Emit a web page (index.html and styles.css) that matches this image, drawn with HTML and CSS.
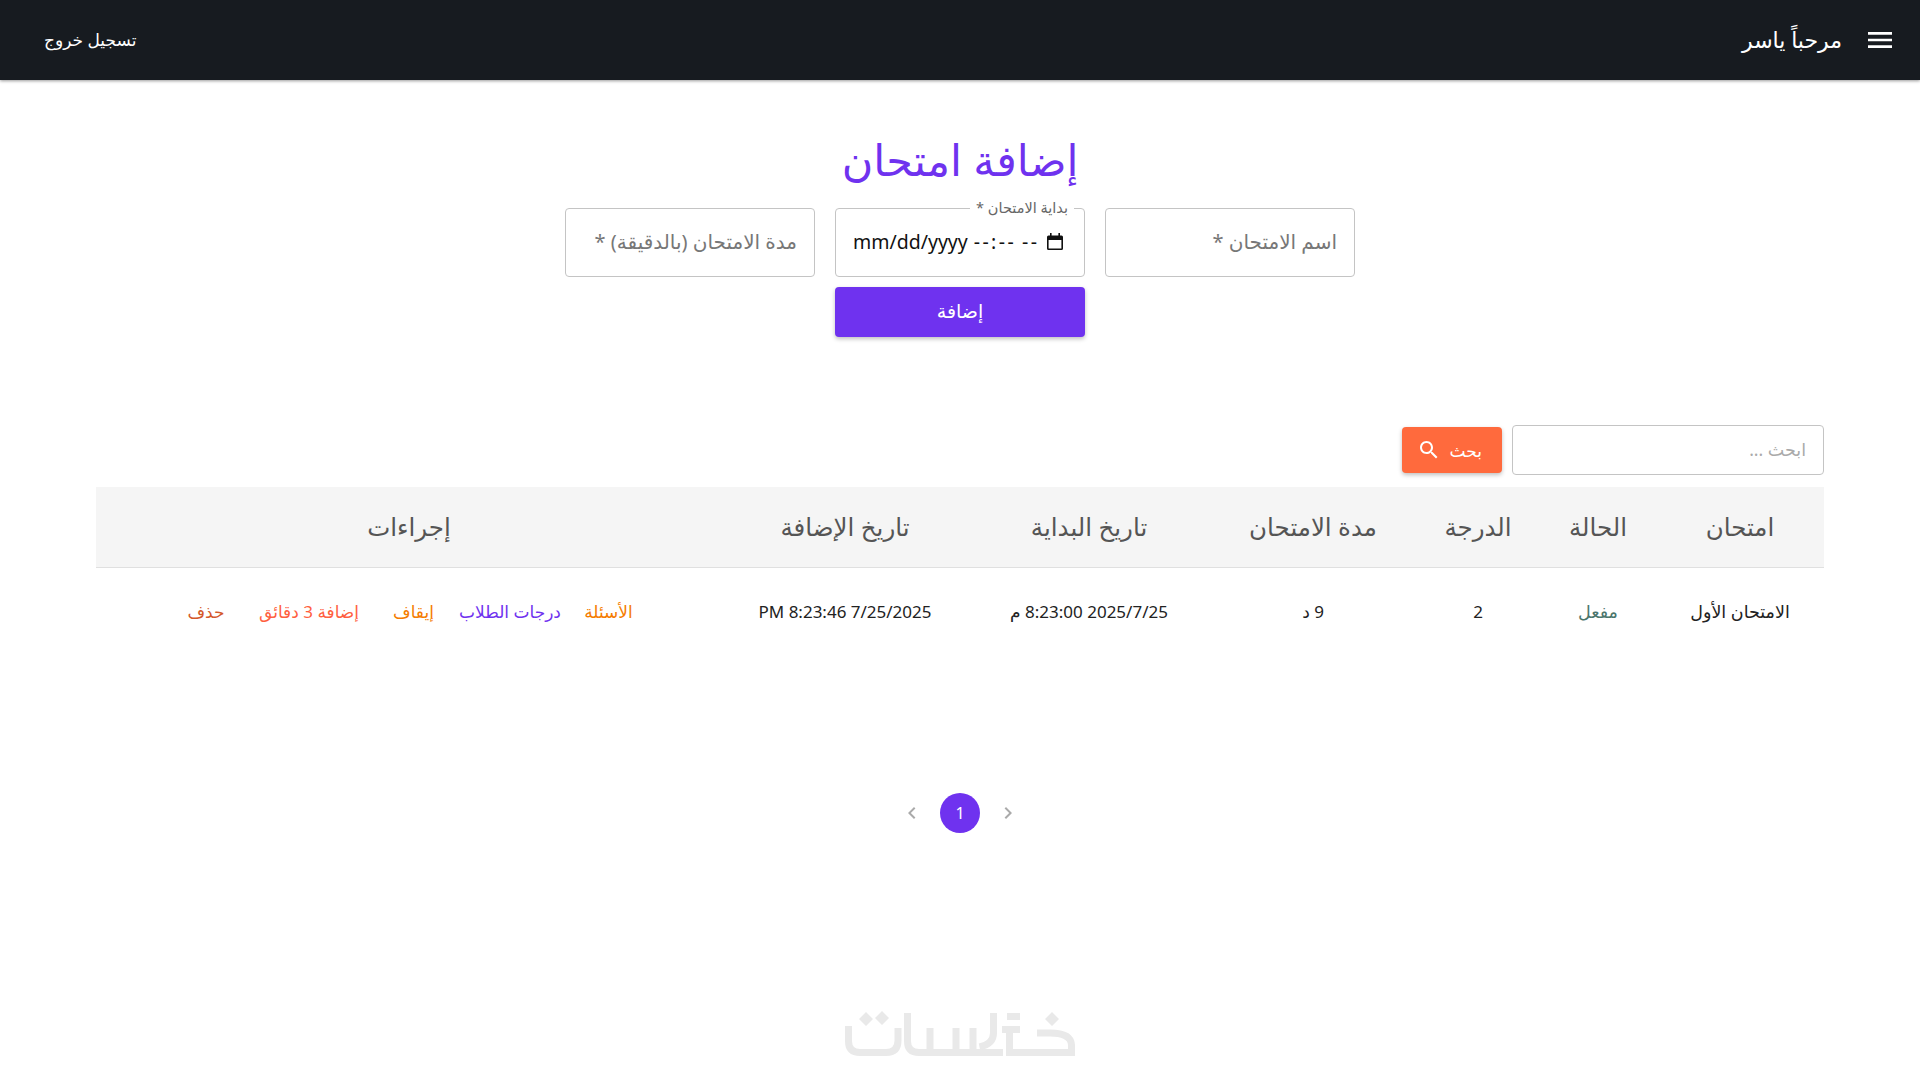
FILE: index.html
```html
<!DOCTYPE html>
<html lang="ar" dir="rtl">
<head>
<meta charset="utf-8">
<title>إضافة امتحان</title>
<link rel="stylesheet" href="styles.css">
</head>
<body>
<header class="nav">
  <div class="nav-start">
    <svg class="menu-icon" viewBox="0 0 24 24"><path d="M3 18h18v-2H3v2zm0-5h18v-2H3v2zm0-7v2h18V6H3z"/></svg>
    <span class="greeting">مرحباً ياسر</span>
  </div>
  <a class="logout">تسجيل خروج</a>
</header>
<main class="main">
  <h1 class="title">إضافة امتحان</h1>
  <form class="exam-form">
    <div class="fields">
      <input class="field" type="text" placeholder="اسم الامتحان *">
      <div class="date-wrap">
        <label class="date-label">بداية الامتحان *</label>
        <div class="field date-input" dir="ltr">
          <span>mm/dd/yyyy</span>
          <span class="dash">--:--</span>
          <span class="dash">--</span>
          <svg class="cal-icon" viewBox="0 0 16 17"><path d="M3 0h1.6v3H3zM11.4 0H13v3h-1.6zM1.5 2.5h13A1.5 1.5 0 0 1 16 4v11.5a1.5 1.5 0 0 1-1.500 1.500h-13A1.500 1.500 0 0 1 0 15.500V4a1.500 1.500 0 0 1 1.500-1.500zM1.600 7v8.400h12.800V7z"/></svg>
        </div>
      </div>
      <input class="field" type="text" placeholder="مدة الامتحان (بالدقيقة) *">
    </div>
    <button class="add-btn" type="button">إضافة</button>
  </form>
  <div class="search-row">
    <input class="search-input" type="text" placeholder="ابحث ...">
    <button class="search-btn" type="button">
      <span>بحث</span>
      <svg class="search-icon" viewBox="0 0 24 24"><path d="M15.5 14h-.79l-.28-.27C15.41 12.59 16 11.11 16 9.5 16 5.91 13.09 3 9.5 3S3 5.91 3 9.5 5.91 16 9.5 16c1.61 0 3.09-.59 4.23-1.57l.27.28v.79l5 4.99L20.49 19l-4.99-5zm-6 0C7.01 14 5 11.99 5 9.5S7.01 5 9.5 5 14 7.01 14 9.5 11.99 14 9.5 14z"/></svg>
    </button>
  </div>
  <table class="exams">
    <colgroup>
      <col class="c1"><col class="c2"><col class="c3"><col class="c4"><col class="c5"><col class="c6"><col>
    </colgroup>
    <thead>
      <tr><th>امتحان</th><th>الحالة</th><th>الدرجة</th><th>مدة الامتحان</th><th>تاريخ البداية</th><th>تاريخ الإضافة</th><th>إجراءات</th></tr>
    </thead>
    <tbody>
      <tr>
        <td class="wide">الامتحان الأول</td>
        <td class="wide status">مفعل</td>
        <td>2</td>
        <td>9 د</td>
        <td>2025/7/25 8:23:00 م</td>
        <td>7/25/2025 8:23:46 PM</td>
        <td>
          <div class="actions">
            <a class="orange">الأسئلة</a>
            <a class="purple">درجات الطلاب</a>
            <a class="orange">إيقاف</a>
            <a class="coral">إضافة 3 دقائق</a>
            <a class="rust">حذف</a>
          </div>
        </td>
      </tr>
    </tbody>
  </table>
  <nav class="pager">
    <svg class="chev" viewBox="0 0 24 24"><path d="M8.59 16.59 13.17 12 8.59 7.41 10 6l6 6-6 6z"/></svg>
    <span class="page-current">1</span>
    <svg class="chev" viewBox="0 0 24 24"><path d="M15.41 16.59 10.83 12l4.58-4.59L14 6l-6 6 6 6z"/></svg>
  </nav>
</main>
<footer class="foot">
  <svg class="logo" viewBox="0 0 230 48" fill="none" stroke="#e9e9e9" stroke-width="7">
    <path d="M3.500 15V30q0 11.500 11.500 11.500H41q12 0 12-12V17"/>
    <path d="M62.500 2V30q0 11.500 11.500 11.500H158"/>
    <path d="M85 17V41M111 17V41M128 17V41"/>
    <path d="M148.500 2V22q0 11-14 14"/>
    <path d="M162 5.500H175M157 18.500H175M164.500 18.500V45"/>
    <path d="M164.500 41.500H226.500V34Q226 22 205 22H192"/>
    <path d="M21 1l7 7-7 7-7-7zM37 0l7 7-7 7-7-7zM207 1l7 7-7 7-7-7z" fill="#e9e9e9" stroke="none"/>
  </svg>
</footer>
</body>
</html>
```

FILE: styles.css
```css
* { box-sizing: border-box; }
html, body { margin: 0; height: 100%; }
body {
  font-family: "Noto Sans", "DejaVu Sans", sans-serif;
  background: #fff;
  color: #222;
  display: flex;
  flex-direction: column;
  overflow: hidden;
}
.nav {
  height: 80px;
  flex: none;
  background: #171b20;
  color: #fff;
  display: flex;
  align-items: center;
  justify-content: space-between;
  padding: 0 24px 0 44px;
  box-shadow: 0 1px 3px rgba(0,0,0,.4);
}
.nav-start { display: flex; align-items: center; gap: 22px; }
.menu-icon { width: 32px; height: 32px; fill: #fff; }
.greeting { font-size: 22px; font-weight: 500; margin-bottom: 2px; }
.logout { font-size: 17px; font-weight: 500; margin-bottom: 2px; }
.main { padding: 0 96px; flex: 1; }
.title {
  margin: 52px 0 0;
  text-align: center;
  font-size: 43px;
  font-weight: 400;
  line-height: 56px;
  color: #6f32ef;
}
.exam-form { display: flex; flex-direction: column; align-items: center; gap: 10px; margin-top: 20px; }
.fields { display: flex; gap: 20px; }
.field {
  width: 250px;
  height: 69px;
  border: 1px solid #c4c4c4;
  border-radius: 4px;
  padding: 0 17px 3px;
  font: 400 20px "Noto Sans", "DejaVu Sans", sans-serif;
  color: #222;
  background: #fff;
  outline: none;
}
.field::placeholder { color: #777; opacity: 1; }
.search-input::placeholder { color: #aaa; opacity: 1; }
.date-wrap { position: relative; }
.date-input {
  display: flex;
  align-items: center;
  gap: 6px;
  font-size: 19.500px;
  color: #111;
  white-space: nowrap;
}
.dash { letter-spacing: 2.400px; flex: none; }
.cal-icon { width: 16px; height: 17px; flex: none; margin-left: auto; margin-right: 4px; fill: #111; }
.date-label {
  position: absolute;
  top: -11px;
  right: 11px;
  padding: 0 6px;
  font-size: 14.500px;
  line-height: 20px;
  color: #666;
  background: #fff;
}
.add-btn {
  width: 250px;
  height: 50px;
  border: 0;
  border-radius: 4px;
  background: #6f32ef;
  color: #fff;
  font: 500 19px "Noto Sans", "DejaVu Sans", sans-serif;
  padding-bottom: 3px;
  box-shadow: 0 2px 4px rgba(0,0,0,.25);
}
.search-row { display: flex; align-items: center; gap: 10px; margin-top: 88px; }
.search-input {
  width: 312px;
  height: 50px;
  border: 1px solid #c4c4c4;
  border-radius: 4px;
  padding: 0 17px 2px;
  font: 400 17.500px "Noto Sans", "DejaVu Sans", sans-serif;
  outline: none;
}
.search-btn {
  width: 100px;
  height: 46px;
  border: 0;
  border-radius: 4px;
  background: #ff6a3d;
  color: #fff;
  font: 500 17px "Noto Sans", "DejaVu Sans", sans-serif;
  display: flex;
  align-items: center;
  justify-content: flex-start;
  gap: 9px;
  padding: 0 20px 0 0;
  box-shadow: 0 2px 4px rgba(0,0,0,.25);
}
.search-icon { width: 24px; height: 24px; fill: #fff; }
.exams { width: 100%; margin-top: 12px; border-collapse: collapse; table-layout: fixed; }
.c1 { width: 168px; }
.c2 { width: 116px; }
.c3 { width: 124px; }
.c4 { width: 206px; }
.c5 { width: 242px; }
.c6 { width: 246px; }
.exams th {
  height: 80px;
  padding-bottom: 2px;
  background: #f5f5f5;
  border-bottom: 1px solid #e0e0e0;
  font-size: 24.500px;
  font-weight: 400;
  color: #555;
}
.exams td {
  height: 90px;
  padding-bottom: 2px;
  text-align: center;
  font-size: 17px;
  color: #222;
}
.exams td.wide { font-size: 17.500px; padding-bottom: 4px; }
.exams td.status { color: #4a756c; }
.actions {
  display: grid;
  grid-template-columns: 76px 121px 72px 137px 69px;
  justify-content: center;
}
.orange { color: #f57c00; }
.purple { color: #6f32ef; }
.coral { color: #ff5f3f; }
.rust { color: #d4582a; }
.pager { display: flex; justify-content: center; align-items: center; gap: 16px; margin-top: 136px; }
.chev { width: 24px; height: 24px; fill: #aaa; }
.page-current {
  width: 40px;
  height: 40px;
  border-radius: 50%;
  background: #6f32ef;
  color: #fff;
  font-size: 16px;
  display: flex;
  align-items: center;
  justify-content: center;
}
.foot { display: flex; justify-content: center; padding-bottom: 21px; flex: none; }
.logo { width: 230px; height: 48px; }
```
